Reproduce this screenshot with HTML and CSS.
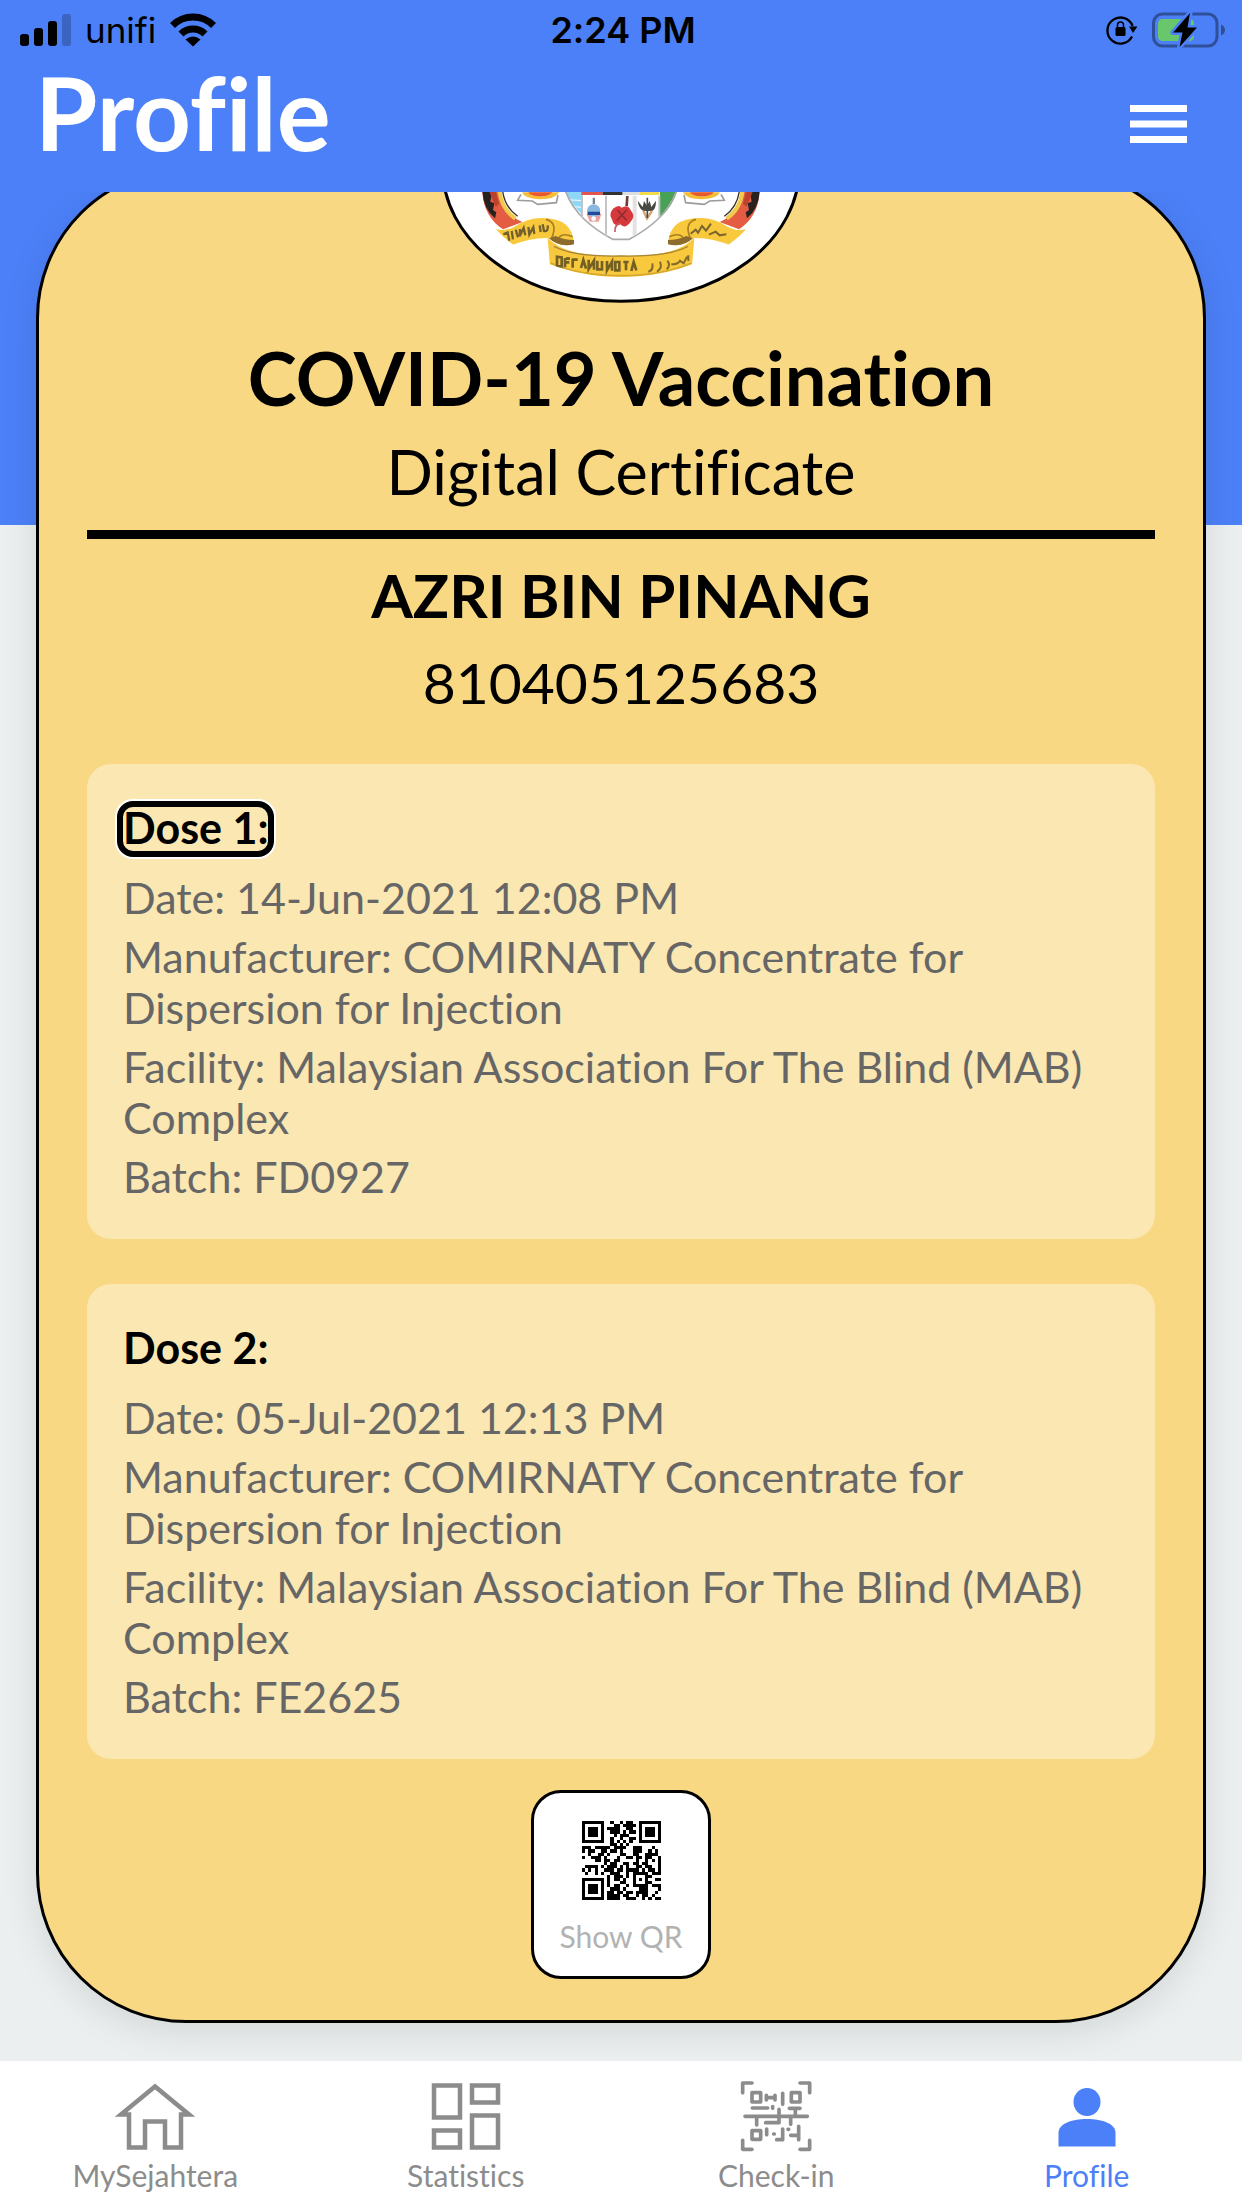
FILE: index.html
```html
<!DOCTYPE html>
<html lang="en">
<head>
<meta charset="utf-8">
<meta name="viewport" content="width=device-width, initial-scale=1">
<title>Profile</title>
<link rel="stylesheet" href="styles.css">
</head>
<body>
<header class="header">
  <div class="status">
    <div class="status-left">
      <svg width="51" height="32" viewBox="0 0 51 32" aria-hidden="true">
        <rect y="20" width="9" height="12" rx="3"/><rect x="14" y="14" width="9" height="18" rx="3"/><rect x="28" y="7" width="9" height="25" rx="3"/><rect x="42" width="9" height="32" rx="3" opacity=".22"/>
      </svg>
      <span class="carrier">unifi</span>
      <svg width="46" height="34" viewBox="0 0 46 34" aria-hidden="true">
        <g fill="none" stroke="#000" stroke-width="7"><path d="M2.500 12.500a29 29 0 0 1 41 0"/><path d="M11 21a17 17 0 0 1 24 0"/></g>
        <path d="M15.500 26.500q7.500-6 15 0L23 33.500z"/>
      </svg>
    </div>
    <span class="time">2:24 PM</span>
    <div class="status-right">
      <svg width="32" height="30" viewBox="0 0 32 30" aria-hidden="true">
        <path d="M26 21.500A13 13 0 1 1 26.600 11" fill="none" stroke="#000" stroke-width="2.300"/><path d="M23 11.500h8.500L27 18z"/>
        <rect x="9.500" y="12" width="10" height="9" rx="1.500"/><path d="M11.500 13V10a3 3 0 0 1 6 0v3" fill="none" stroke="#000" stroke-width="1.500"/>
      </svg>
      <svg width="74" height="36" viewBox="0 0 74 36" aria-hidden="true">
        <rect x="1.500" y="2" width="63.500" height="32" rx="9" fill="none" stroke="#2f5099" stroke-width="3"/>
        <rect x="6" y="7" width="36" height="22" rx="4.500" fill="#68c76a"/>
        <path d="M69 12.500q4 2 4 5.500t-4 5.500z" fill="#2f4f95"/>
        <path d="M38 1 21 20.500h9.500L27.500 35 45 15.500H35.500z" stroke="#4c80f8" stroke-width="5" stroke-linejoin="round" fill="#4c80f8"/>
        <path d="M38 1 21 20.500h9.500L27.500 35 45 15.500H35.500z"/>
      </svg>
    </div>
  </div>
  <div class="titlebar">
    <h1>Profile</h1>
    <button class="menu" type="button" aria-label="Menu">
      <svg width="57" height="38" viewBox="0 0 57 38" fill="#fff" aria-hidden="true"><path d="M0 0h57v7H0zM0 15.500h57v7H0zM0 31h57v7H0z"/></svg>
    </button>
  </div>
</header>

<main class="main">
  <article class="certificate">
    <svg class="emblem" viewBox="63 -414 1080 810" role="img" aria-label="Coat of arms">
      <defs><clipPath id="crest"><ellipse cx="603" cy="-9" rx="455" ry="327"/></clipPath></defs>
      <ellipse cx="603" cy="-9" rx="535" ry="400" fill="#fff" stroke="#000" stroke-width="9"/>
      <g clip-path="url(#crest)">
        <path d="M433 50q20 50 55 82V50z" fill="#8fd7f7"/><path d="M440 86l44 3M452 106l34 3" stroke="#e6f6fc" stroke-width="4"/>
        <path d="M720 50h55q-15 55-55 90z" fill="#48a155"/>
        <path d="M484 60h64v12h-64z" fill="#e1554a"/><path d="M548 60h60v12h-60z" fill="#333"/><path d="M608 60h50v12h-50z" fill="#ddd"/><path d="M658 60h60v12h-60z" fill="#f2db4d"/>
        <path d="M433 50c25 80 90 125 145 155h50c55-30 120-75 145-155" fill="none" stroke="#aaa" stroke-width="5"/>
        <path d="M486 74v67M558 74v122M718 74v66" fill="none" stroke="#c4c4c4" stroke-width="6"/><path d="M644 74v118" stroke="#e2e2e2" stroke-width="12"/>
        <path d="M500 130q22-24 44 0l-8 22h-27z" fill="#eda19b"/><ellipse cx="521" cy="119" rx="20" ry="19" fill="#8ab7df"/><path d="M518 80h7v19h-7z" fill="#77858c"/><path d="M503 122h37v10h-37z" fill="#214c9b"/><circle cx="521" cy="143" r="7" fill="#fff"/>
        <path d="M622 75l-2 30" stroke="#6f3c39" stroke-width="8"/><path d="M579 113q18-14 26-3 19-12 27 8 16 17 0 34-17 24-31 8-20 8-24-12-12-18 2-35z" fill="#d5393c"/><path d="M592 117l28 31m0-31-29 31" stroke="#922b31" stroke-width="5"/><path d="M601 158q-18 3-16 25" fill="none" stroke="#ca5b60" stroke-width="5"/>
        <path d="M653 89q5 30 20 31h23q12-5 12-31l-14 19-5-18-8 14-9-14-4 18z" fill="#494841"/><path d="M670 120l11 22 15-22" fill="none" stroke="#d2a46f" stroke-width="7"/><path d="M682 80v61" stroke="#494841" stroke-width="5"/>
        <g id="side">
          <path d="M187 55c0 55 25 96 62 120l58-22c-36-15-64-46-72-98z" fill="#e45c42"/>
          <path d="M187 60q3 55 38 82l4-18-10-7 4-20-12-5 6-32z" fill="#272220"/><path d="M207 60h20l10 38-10 9z" fill="#bb422f"/><path d="M238 55q4 57 48 88" fill="none" stroke="#f1c94b" stroke-width="12"/><path d="M248 60q6 48 45 76" fill="none" stroke="#3a3028" stroke-width="4"/>
          <path d="M303 70l-10 18 44 2 16 10 56-5 5-23" fill="none" stroke="#9c9c9c" stroke-width="5"/><path d="M306 64h112q-14 22-60 21-45-2-52-21z" fill="#f6bd39"/><path d="M325 64h72q-12 13-38 12-28-1-34-12z" fill="#e75733"/>
          <path d="M228 174q25 9 55-7 42-28 85-26 90 0 94 78-45 13-75-18-55-2-120 25z" fill="#f8c93d"/><path d="M378 145q37 10 17 57M413 209q8-28 45-12" fill="none" stroke="#a87f22" stroke-width="5"/><path d="M387 202q30 28 75 18v-13q-30 0-55-12z" fill="#8c6b2c"/>
        </g>
        <use href="#side" transform="matrix(-1 0 0 1 1206 0)"/>
        <path d="M383 200q55 60 220 54 165 6 220-54l-7 85q-80 34-213 34t-213-34z" fill="#f8c93d"/><path d="M402 226q60 32 201 29 141 3 201-29" fill="none" stroke="#a98635" stroke-width="4"/><path d="M392 276q85 38 211 38t211-38" fill="none" stroke="#d6a72e" stroke-width="5"/>
        <path d="M250 190l13-6 5 25m7-29 4 25m8-29 7 23m6-25-1 22 12-25 5 22m9-25 3 22 12-21 3 20m16-26 3 20m6-23 4 20q13 3 11-17" fill="none" stroke="#74602c" stroke-width="7"/>
        <path d="M411 257v28l14 1v-27zm24 4v28m0-15h13m-10-12 12 1m8 1v26m15-24h-18m28 25 7-24 8 26m8-27v28l16-25v27m10-27v26h14v-25m15 0v28l15-26v27m10-26h12v25h-12zm24 0h16m-8 0v25m16 2 7-27 8 25" fill="none" stroke="#746025" stroke-width="8"/>
        <path d="M685 302q16-4 12-25m14 25q17-10 9-30m20 23q13-12 2-26m12 11q20 0 26-11l11 8 10-20m4 13v-17" fill="none" stroke="#826a2a" stroke-width="6"/>
        <path d="M812 188l15-12 7 9 12-20 12 14 15-21m-6 33 20-9 12 11 20-3" fill="none" stroke="#7b652c" stroke-width="6"/>
      </g>
    </svg>

    <h2 class="cert-title">COVID-19 Vaccination</h2>
    <p class="cert-kind">Digital Certificate</p>
    <hr class="rule">
    <p class="holder">AZRI BIN PINANG</p>
    <p class="holder-id">810405125683</p>

    <section class="dose">
      <h3 class="dose-title focused" tabindex="0">Dose 1:</h3>
      <p>Date: 14-Jun-2021 12:08 PM</p>
      <p>Manufacturer: COMIRNATY Concentrate for Dispersion for Injection</p>
      <p>Facility: Malaysian Association For The Blind (MAB) Complex</p>
      <p>Batch: FD0927</p>
    </section>
    <section class="dose">
      <h3 class="dose-title">Dose 2:</h3>
      <p>Date: 05-Jul-2021 12:13 PM</p>
      <p>Manufacturer: COMIRNATY Concentrate for Dispersion for Injection</p>
      <p>Facility: Malaysian Association For The Blind (MAB) Complex</p>
      <p>Batch: FE2625</p>
    </section>

    <button class="qr" type="button">
      <svg id="qr" width="79" height="79" viewBox="0 0 25 25" shape-rendering="crispEdges" aria-hidden="true"></svg>
      <span>Show QR</span>
    </button>
  </article>
</main>

<nav class="tabs">
  <a class="tab" href="#home">
    <svg width="80" height="80" viewBox="0 0 80 80" fill="none" stroke="currentColor" stroke-width="4.500" aria-hidden="true"><path d="M40 9.500 6 37.500H14V70.500H30V44.500H50V70.500H66V37.500H74z"/></svg>
    <span>MySejahtera</span>
  </a>
  <a class="tab" href="#statistics">
    <svg width="80" height="80" viewBox="0 0 80 80" fill="none" stroke="currentColor" stroke-width="4.500" aria-hidden="true"><path d="M8 8.500h26v32H8zM46 8.500h26v17H46zM8 53.500h26v17H8zM46 38.500h26v32H46z"/></svg>
    <span>Statistics</span>
  </a>
  <a class="tab" href="#check-in">
    <!-- drawn on a 3x grid for the fine code marks -->
    <svg width="80" height="80" viewBox="31 15 240 240" fill="none" stroke="currentColor" stroke-width="11" stroke-linecap="round" stroke-linejoin="round" aria-hidden="true">
      <path d="M51 62V33H79M223 33H252V62M51 205V232H79M223 232H252V205"/>
      <path d="M79 62h26v28H79zM197 62h26v28h-26zM79 176h26v26H79z"/>
      <path d="M122 70V84M148 70V84M122 77H148M171 64V97M80 108H126M141 104V109M191 109H223M209 109V133M58 133H245M93 133V159M160 112V152H120M195 133V157M123 171V188M144 186H146M171 171V203H153M187 172H189M219 163V203M195 190H219"/>
    </svg>
    <span>Check-in</span>
  </a>
  <a class="tab active" href="#profile" aria-current="page">
    <svg width="80" height="80" viewBox="0 0 80 80" fill="currentColor" aria-hidden="true"><ellipse cx="40" cy="25" rx="13.500" ry="14"/><path d="M11.500 69.500V56C11.500 47 24 42 40 42s28.500 5 28.500 14v13.500z"/></svg>
    <span>Profile</span>
  </a>
</nav>
<script src="qr.js"></script>
</body>
</html>
```
FILE: styles.css
```css
* {
  box-sizing: border-box;
}

body {
  margin: 0;
  min-height: 100vh;
  display: flex;
  flex-direction: column;
  background: #ebeff0;
  color: #000;
  font-family: Lato, "Liberation Sans", sans-serif;
  font-variant-ligatures: none;
}

h1, h2, h3, p {
  margin: 0;
}

svg {
  display: block;
  flex: none;
}

button {
  font: inherit;
  cursor: pointer;
}

/* Header */
.header {
  position: sticky;
  top: 0;
  z-index: 2;
  background: #4c80f8;
}

.status {
  display: grid;
  grid-template-columns: 1fr auto 1fr;
  align-items: center;
  height: 52px;
  padding: 8px 16px 0 20px;
  font-family: Inter, "Liberation Sans", sans-serif;
  font-size: 35px;
  line-height: 44px;
}

.status-left,
.status-right {
  display: flex;
  align-items: center;
  gap: 14px;
}

.status-right {
  justify-content: flex-end;
}

.time {
  font-size: 36px;
  font-weight: 600;
}

.titlebar {
  display: flex;
  align-items: flex-start;
  justify-content: space-between;
  height: 140px;
  padding: 0 40px 0 35px;
}

h1 {
  color: #fff;
  font-size: 101px;
  line-height: 120px;
  font-weight: 700;
}

.menu {
  align-self: center;
  padding: 16px 15px 12px;
  border: 0;
  background: none;
}

/* Certificate */
.main {
  flex: 1;
  overflow: hidden;
  padding: 0 36px 37px;
  background: linear-gradient(#4c80f8 333px, #ebeff0 333px);
}

.certificate {
  position: relative;
  display: flex;
  flex-direction: column;
  margin-top: -24px;
  padding: 163px 48px 41px;
  border: 3px solid #000;
  border-radius: 150px;
  background: #f8d882;
  box-shadow: 0 9px 36px rgba(0, 0, 0, 0.1);
  text-align: center;
}

.emblem {
  position: absolute;
  top: -138px;
  left: 50%;
  width: 360px;
  height: 270px;
  margin-left: -180px;
}

.cert-title {
  margin-bottom: 14px;
  font-size: 74px;
  line-height: 88px;
  font-weight: 700;
}

.cert-kind,
.holder {
  font-size: 60px;
  line-height: 72px;
}

.cert-kind {
  font-size: 61px;
}

.holder {
  font-weight: 700;
}

.rule {
  width: 100%;
  height: 9px;
  margin: 22px 0 20px;
  border: 0;
  background: #000;
}

.holder-id {
  margin: 15px 0 46px;
  font-size: 57px;
  line-height: 72px;
}

.dose {
  display: flex;
  flex-direction: column;
  gap: 8px;
  padding: 38px 36px 37px;
  border-radius: 24px;
  background: #fae7b2;
  color: #666;
  font-size: 43px;
  line-height: 51px;
  text-align: left;
}

.dose + .dose {
  margin-top: 45px;
}

.dose-title {
  width: fit-content;
  height: 44px;
  margin: 5px 0 13px;
  color: #000;
  font-size: 43px;
  line-height: 42px;
  font-weight: 700;
}

.focused {
  border-radius: 10px;
  outline: 6px solid #000;
  box-shadow: 0 0 0 8px #fff;
}

.qr {
  align-self: center;
  display: flex;
  flex-direction: column;
  align-items: center;
  gap: 18px;
  width: 180px;
  margin-top: 31px;
  padding: 28px 0 22px;
  border: 3px solid #000;
  border-radius: 30px;
  background: #fff;
  color: #b2b2b2;
  font-size: 30px;
  line-height: 36px;
}

/* Bottom tabs */
.tabs {
  display: grid;
  grid-template-columns: repeat(4, 1fr);
  padding: 16px 0 15px;
  background: #fff;
}

.tab {
  display: flex;
  flex-direction: column;
  align-items: center;
  color: #8c8c8c;
  font-size: 30px;
  line-height: 36px;
  text-decoration: none;
}

.tab.active {
  color: #4c80f8;
}
```
FILE: qr.js
```javascript
// One string per row of the code, "#" is a dark module.
const rows = [
  "#######..#..#.##..#######",
  "#.....#...##.####.#.....#",
  "#.###.#.####..##..#.###.#",
  "#.###.#..###.#.##.#.###.#",
  "#.###.#...#.###...#.###.#",
  "#.....#..#..#..##.#.....#",
  "#######..#.#.#.#..#######",
  ".........##.#.#..........",
  "###.#####.####..###...#..",
  "#.##..##.##.#...###..#.#.",
  "..#..##.#...##..##..####.",
  "#..###.#...#..##.##.##..#",
  "....##.##.##.....#..#.#.#",
  ".......#.##..##.##.##...#",
  ".####.#.###.#.#..##.##..#",
  "#.#.#..###.##.####.#.##.#",
  ".#..#.#..###..#.#####.###",
  "........#.###.#.#...##...",
  "#######.#.##.#..#.#.#..##",
  "#.....#.#...##..#...##...",
  "#.###.#.#.##..#.#####.###",
  "#.###.#..###.#....###...#",
  "#.###.#.##.##.##.####..#.",
  "#.....#.####.##..#.##.#..",
  "#######.####..###..#.#.##"
];
let d = "";
rows.forEach((row, y) => {
  [...row].forEach((cell, x) => {
    if (cell === "#") d += `M${x} ${y}h1v1h-1z`;
  });
});
const path = document.createElementNS("http://www.w3.org/2000/svg", "path");
path.setAttribute("d", d);
document.getElementById("qr").append(path);
```
